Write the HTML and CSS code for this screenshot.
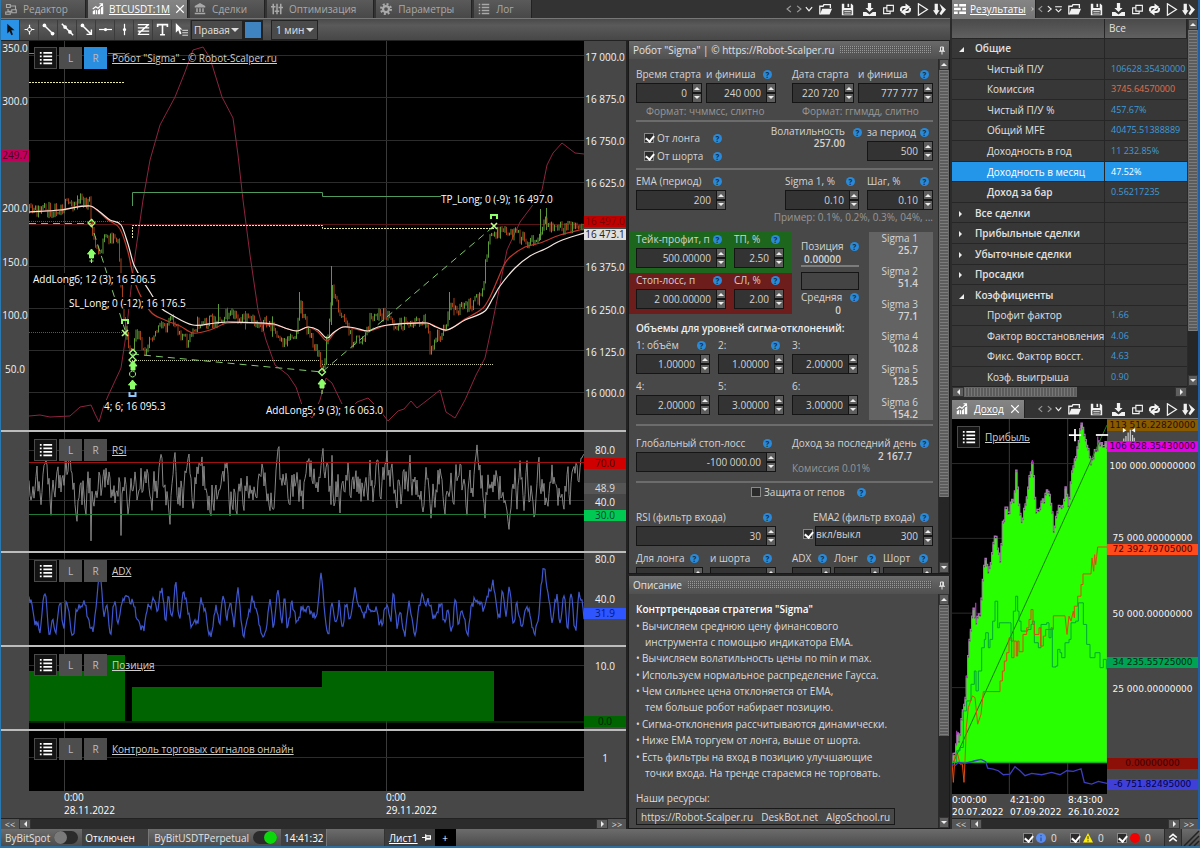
FILE: index.html
```html
<!DOCTYPE html>
<html lang="ru">
<head>
<meta charset="utf-8">
<title>BTCUSDT:1M</title>
<link rel="stylesheet" href="styles.css">
</head>
<body>
<svg class="defs" aria-hidden="true">
  <symbol id="i-list" viewBox="0 0 16 16"><path d="M1 2h2M1 6h2M1 10h2M1 14h2M5 2h10M5 6h10M5 10h10M5 14h10" stroke="currentColor" stroke-width="2" fill="none"/></symbol>
  <symbol id="i-chart" viewBox="0 0 16 16"><path d="M1 15v-4l3-2v6zM5 15V9l2 1v5zM8 15v-5l3-3v8zM12 15V6l3-2v11z" fill="currentColor"/><path d="M1 8l4-3 3 2 6-6M10 1h4v3" stroke="currentColor" stroke-width="1.5" fill="none"/></symbol>
  <symbol id="i-flow" viewBox="0 0 16 16"><path d="M2 2h5v4H2zM9 9h6v4H9zM7 4h7v5M9 11H4V8M1 12h6v3H1z" stroke="currentColor" stroke-width="1.5" fill="none"/></symbol>
  <symbol id="i-bank" viewBox="0 0 16 16"><path d="M8 0l7 4v2H1V4zM3 7h2v5H3zM7 7h2v5H7zM11 7h2v5h-2zM1 13h14v2H1z" fill="currentColor"/></symbol>
  <symbol id="i-sliders" viewBox="0 0 16 16"><path d="M3 1v14M8 1v14M13 1v14M0 5h6M5 11h6M10 6h6" stroke="currentColor" stroke-width="2" fill="none"/></symbol>
  <symbol id="i-gear" viewBox="0 0 16 16"><circle cx="8" cy="8" r="4" stroke="currentColor" stroke-width="3" fill="none"/><circle cx="8" cy="8" r="6.5" stroke="currentColor" stroke-width="3" stroke-dasharray="2.6 2.5" fill="none"/></symbol>
  <symbol id="i-table" viewBox="0 0 16 16"><path d="M0 3h5M7 3h9M0 8h9M11 8h5M0 13h5M7 13h9" stroke="currentColor" stroke-width="3.5" fill="none"/></symbol>
  <symbol id="i-x" viewBox="0 0 16 16"><path d="M2 2l12 12M14 2L2 14" stroke="currentColor" stroke-width="1.8" fill="none"/></symbol>
  <symbol id="i-lt" viewBox="0 0 16 16"><path d="M11 3L5 8l6 5" stroke="currentColor" stroke-width="2" fill="none"/></symbol>
  <symbol id="i-gt" viewBox="0 0 16 16"><path d="M5 3l6 5-6 5" stroke="currentColor" stroke-width="2" fill="none"/></symbol>
  <symbol id="i-down" viewBox="0 0 16 16"><path d="M3 5l5 6 5-6" stroke="currentColor" stroke-width="2" fill="none"/></symbol>
  <symbol id="i-more" viewBox="0 0 16 16"><path d="M2 4h12M3 8l5 5 5-5" stroke="currentColor" stroke-width="2" fill="none"/></symbol>
  <symbol id="i-open" viewBox="0 0 16 16"><path d="M1 14V4h4l1-2h8v4" stroke="currentColor" stroke-width="1.6" fill="none"/><path d="M1 14l3-7h12l-3 7z" fill="currentColor"/></symbol>
  <symbol id="i-save" viewBox="0 0 16 16"><path d="M1 1h3v5h8V1h1l2 2v12H1zM3 9v5h10V9z" fill="currentColor" fill-rule="evenodd"/><path d="M8 1h2v4H8z" fill="currentColor"/><path d="M4 10.500h8M4 12.500h8" stroke="currentColor"/></symbol>
  <symbol id="i-get" viewBox="0 0 16 16"><path d="M6 0h4v6h3l-5 5-5-5h3zM0 11h4l4 3 4-3h4v5H0z" fill="currentColor"/></symbol>
  <symbol id="i-copy" viewBox="0 0 16 16"><path d="M6 3h8v7H6zM6 6H2v7h8v-3" stroke="currentColor" stroke-width="1.4" fill="none"/></symbol>
  <symbol id="i-sync" viewBox="0 0 16 16"><path d="M2.500 10V8q0-3 3-3H9M13.500 6v2q0 3-3 3H7" stroke="currentColor" stroke-width="2.600" fill="none"/><path d="M8 0.500l6 4.500-6 4.500zM8 6.500v9l-6-4.500z" fill="currentColor"/></symbol>
  <symbol id="i-play" viewBox="0 0 16 16"><path d="M3 1l11 7-11 7z" stroke="currentColor" stroke-width="1.6" fill="none"/></symbol>
  <symbol id="i-run" viewBox="0 0 16 16"><path d="M2 1h4v8h2l-4 6-4-6h2zM8 1l8 7-6 7-2-2 3-5z" fill="currentColor"/></symbol>
  <symbol id="i-pin" viewBox="0 0 16 16"><path d="M5 1h6v8H5zM2 9.500h12M8 10v6M9.500 1v8" stroke="currentColor" stroke-width="2" fill="none"/></symbol>
</svg>

<div class="app">
  <div class="top">
    <main class="main">
      <header class="tabbar">
        <nav class="tabs">
          <button class="tab"><svg><use href="#i-flow"/></svg>Редактор</button>
          <button class="tab active"><svg><use href="#i-chart"/></svg><span>BTCUSDT:1M</span><svg class="close"><use href="#i-x"/></svg></button>
          <button class="tab"><svg><use href="#i-bank"/></svg>Сделки</button>
          <button class="tab"><svg><use href="#i-sliders"/></svg>Оптимизация</button>
          <button class="tab"><svg><use href="#i-gear"/></svg>Параметры</button>
          <button class="tab"><svg><use href="#i-list"/></svg>Лог</button>
        </nav>
        <div class="actions">
          <button class="nav dim" aria-label="Назад"><svg><use href="#i-lt"/></svg></button><button class="nav dim" aria-label="Вперёд"><svg><use href="#i-gt"/></svg></button><button class="nav" aria-label="Список"><svg><use href="#i-down"/></svg></button>
          <button class="wide" aria-label="Открыть"><svg><use href="#i-open"/></svg></button><button class="wide" aria-label="Сохранить"><svg><use href="#i-save"/></svg></button><button class="wide" aria-label="Загрузить"><svg><use href="#i-get"/></svg></button><button aria-label="Копировать"><svg><use href="#i-copy"/></svg></button><button aria-label="Обновить"><svg><use href="#i-sync"/></svg></button><button aria-label="Пуск"><svg><use href="#i-play"/></svg></button><button aria-label="Выполнить"><svg><use href="#i-run"/></svg></button>
        </div>
      </header>

      <div class="toolbar">
        <button class="tool on" aria-label="Курсор"><svg viewBox="0 0 16 16"><path d="M4 1v12l3-3 2 5 2-1-2-5h4z" fill="#111"/></svg></button>
        <button class="tool" aria-label="Перекрестие"><svg viewBox="0 0 16 16"><path d="M8 2v4M8 10v4M2 8h4M10 8h4" stroke="#fff" stroke-width="1.500"/><circle cx="8" cy="8" r="2.500" stroke="#fff" fill="none"/></svg></button>
        <button class="tool" aria-label="Отрезок"><svg viewBox="0 0 16 16"><path d="M3 3l10 10" stroke="#fff" stroke-width="1.800"/><circle cx="3" cy="3" r="2.300" fill="#fff"/><circle cx="13" cy="13" r="2.300" fill="#fff"/></svg></button>
        <button class="tool" aria-label="Прямая"><svg viewBox="0 0 16 16"><path d="M1 1l14 14" stroke="#fff" stroke-width="1.800"/><circle cx="5" cy="5" r="2.300" fill="#fff"/><circle cx="11" cy="11" r="2.300" fill="#fff"/></svg></button>
        <button class="tool" aria-label="Луч"><svg viewBox="0 0 16 16"><path d="M3 3l11 11M14 8v6H8" stroke="#fff" stroke-width="1.800" fill="none"/><circle cx="3" cy="3" r="2.300" fill="#fff"/></svg></button>
        <button class="tool" aria-label="Горизонталь"><svg viewBox="0 0 16 16"><path d="M0 8h16" stroke="#fff" stroke-width="1.500"/><circle cx="8" cy="8" r="2" fill="#fff"/></svg></button>
        <button class="tool" aria-label="Вертикаль"><svg viewBox="0 0 16 16"><path d="M8 1v14" stroke="#fff" stroke-width="1.500"/><circle cx="8" cy="8" r="2" fill="#fff"/></svg></button>
        <button class="tool" aria-label="Фибоначчи"><svg viewBox="0 0 16 16"><path d="M1 2h14M1 6h14M1 10h14M1 14h14M2 13L14 2" stroke="#fff" stroke-width="1.800"/></svg></button>
        <button class="tool" aria-label="Текст"><svg viewBox="0 0 16 16"><path d="M2 5V2h12v3M8 2v12M5 14.500h6" stroke="#fff" stroke-width="2" fill="none"/></svg></button>
        <button class="tool" aria-label="Выбор"><svg viewBox="0 0 16 16"><path d="M1 0v12l3-3 2 5 2-1-2-5h3z" fill="#fff"/><path d="M9 9h7M9 12h7M9 15h7" stroke="#fff"/></svg></button>
        <label class="pick"><select class="axis-side" aria-label="Ось"><option>Правая</option></select></label>
        <button class="swatch" aria-label="Цвет"></button>
        <label class="pick period"><select class="tf" aria-label="Период"><option>1 мин</option></select></label>
      </div>

      <div class="work">
        <section class="charts">
          <div class="pane pane-price" id="price">
            <div class="axis left"></div><div class="plot"></div><div class="axis right"></div>
            <div class="legend"><button class="lb ic" aria-label="Меню"><svg><use href="#i-list"/></svg></button><button class="lb">L</button><button class="lb on">R</button><a href="#price">Робот "Sigma" - © Robot-Scalper.ru</a></div>
          </div>
          <div class="pane pane-rsi" id="rsi">
            <div class="axis left"></div><div class="plot"></div><div class="axis right"></div>
            <div class="legend"><button class="lb ic" aria-label="Меню"><svg><use href="#i-list"/></svg></button><button class="lb">L</button><button class="lb">R</button><a href="#rsi">RSI</a></div>
          </div>
          <div class="pane pane-adx" id="adx">
            <div class="axis left"></div><div class="plot"></div><div class="axis right"></div>
            <div class="legend"><button class="lb ic" aria-label="Меню"><svg><use href="#i-list"/></svg></button><button class="lb">L</button><button class="lb">R</button><a href="#adx">ADX</a></div>
          </div>
          <div class="pane pane-pos" id="pos">
            <div class="axis left"></div><div class="plot"></div><div class="axis right"></div>
            <div class="legend"><button class="lb ic" aria-label="Меню"><svg><use href="#i-list"/></svg></button><button class="lb">L</button><button class="lb">R</button><a href="#pos">Позиция</a></div>
          </div>
          <div class="pane pane-ctl" id="ctl">
            <div class="axis left"></div><div class="plot"></div><div class="axis right"></div>
            <div class="legend"><button class="lb ic" aria-label="Меню"><svg><use href="#i-list"/></svg></button><button class="lb">L</button><button class="lb">R</button><a href="#ctl">Контроль торговых сигналов онлайн</a></div>
          </div>
          <div class="times"><span>0:00<br>28.11.2022</span><span>0:00<br>29.11.2022</span></div>
          <div class="hbar"><button class="jump">&lt;&lt;</button><button class="arr l" aria-label="Влево"></button><div class="track"></div><button class="arr r" aria-label="Вправо"></button><button class="jump">&gt;&gt;</button></div>
        </section>

        <section class="docks">
          <div class="dock dock-params">
            <div class="dock-title">Робот "Sigma" | © https://Robot-Scalper.ru<i></i><svg><use href="#i-pin"/></svg></div>
            <div class="dock-body">
              <form class="form">
                <div class="sec two">
                  <div>
                    <div class="g-time">
                      <label for="t1">Время старта</label><label for="t2">и финиша<b class="help">?</b></label>
                      <span class="num"><input id="t1" value="0"><button type="button" class="sp"></button></span><span class="num"><input id="t2" value="240 000"><button type="button" class="sp"></button></span>
                    </div>
                    <p class="hint in">Формат: ччммсс, слитно</p>
                  </div>
                  <div>
                    <div class="g-date">
                      <label for="d1">Дата старта</label><label for="d2">и финиша<b class="help">?</b></label>
                      <span class="num"><input id="d1" value="220 720"><button type="button" class="sp"></button></span><span class="num"><input id="d2" value="777 777"><button type="button" class="sp"></button></span>
                    </div>
                    <p class="hint in">Формат: ггммдд, слитно</p>
                  </div>
                </div>
                <div class="sec g-vol">
                  <div class="checks"><span><label><input type="checkbox" checked>От лонга</label><b class="help">?</b></span><span><label><input type="checkbox" checked>От шорта</label><b class="help">?</b></span></div>
                  <div class="vol"><span>Волатильность</span><strong>257.00</strong></div><b class="help vh">?</b>
                  <div class="fld"><label for="vp">за период<b class="help">?</b></label><span class="num"><input id="vp" value="500"><button type="button" class="sp"></button></span></div>
                </div>
                <div class="sec g-ema">
                  <div class="fld"><label for="ema">EMA (период)<b class="help">?</b></label><span class="num"><input id="ema" value="200"><button type="button" class="sp"></button></span></div>
                  <div class="fld s1"><label for="s1">Sigma 1, %<b class="help">?</b></label><span class="num"><input id="s1" value="0.10"><button type="button" class="sp"></button></span></div>
                  <div class="fld"><label for="st">Шаг, %<b class="help">?</b></label><span class="num"><input id="st" value="0.10"><button type="button" class="sp"></button></span></div>
                  <p class="hint ex">Пример: 0.1%, 0.2%, 0.3%, 04%, ...</p>
                </div>
                <div class="sec g-levels">
                  <div class="lv-left">
                    <div class="lv-top">
                      <div>
                        <div class="band tp">
                          <div class="fld"><label for="tp">Тейк-профит, п<b class="help">?</b></label><span class="num"><input id="tp" value="500.00000"><button type="button" class="sp"></button></span></div>
                          <div class="fld"><label for="tpp">ТП, %<b class="help">?</b></label><span class="num"><input id="tpp" value="2.50"><button type="button" class="sp"></button></span></div>
                        </div>
                        <div class="band sl">
                          <div class="fld"><label for="sl">Стоп-лосс, п<b class="help">?</b></label><span class="num"><input id="sl" value="2 000.00000"><button type="button" class="sp"></button></span></div>
                          <div class="fld"><label for="slp">СЛ, %<b class="help">?</b></label><span class="num"><input id="slp" value="2.00"><button type="button" class="sp"></button></span></div>
                        </div>
                      </div>
                      <div class="pos">
                        <label for="pf">Позиция<b class="help">?</b></label><strong class="ruled">0.00000</strong>
                        <input id="pf" class="blank" value="">
                        <span class="row">Средняя<b class="help">?</b></span><strong>0</strong>
                      </div>
                    </div>
                    <h4>Объемы для уровней сигма-отклонений:</h4>
                    <div class="g-qty">
                      <div class="fld"><label for="q1">1: объём<b class="help">?</b></label><span class="num"><input id="q1" value="1.00000"><button type="button" class="sp"></button></span></div>
                      <div class="fld"><label for="q2">2:<b class="help">?</b></label><span class="num"><input id="q2" value="1.00000"><button type="button" class="sp"></button></span></div>
                      <div class="fld"><label for="q3">3:</label><span class="num"><input id="q3" value="2.00000"><button type="button" class="sp"></button></span></div>
                      <div class="fld"><label for="q4">4:</label><span class="num"><input id="q4" value="2.00000"><button type="button" class="sp"></button></span></div>
                      <div class="fld"><label for="q5">5:</label><span class="num"><input id="q5" value="3.00000"><button type="button" class="sp"></button></span></div>
                      <div class="fld"><label for="q6">6:</label><span class="num"><input id="q6" value="3.00000"><button type="button" class="sp"></button></span></div>
                    </div>
                  </div>
                  <dl class="sigmas">
                    <div><dt>Sigma 1</dt><dd>25.7</dd></div><div><dt>Sigma 2</dt><dd>51.4</dd></div><div><dt>Sigma 3</dt><dd>77.1</dd></div><div><dt>Sigma 4</dt><dd>102.8</dd></div><div><dt>Sigma 5</dt><dd>128.5</dd></div><div><dt>Sigma 6</dt><dd>154.2</dd></div>
                  </dl>
                </div>
                <div class="sec two g-glob">
                  <div class="fld"><label for="gs">Глобальный стоп-лосс<b class="help">?</b></label><span class="num"><input id="gs" value="-100 000.00"><button type="button" class="sp"></button></span></div>
                  <div class="day"><span class="row">Доход за последний день<b class="help">?</b></span><strong>2 167.7</strong><span class="hint">Комиссия 0.01%</span></div>
                </div>
                <div class="sec last">
                  <div class="gap"><label><input type="checkbox">Защита от гепов</label><b class="help">?</b></div>
                  <div class="two">
                    <div class="fld"><label for="rsi-f">RSI (фильтр входа)<b class="help">?</b></label><span class="num"><input id="rsi-f" value="30"><button type="button" class="sp"></button></span></div>
                    <div class="fld e2"><label for="e2">EMA2 (фильтр входа)<b class="help">?</b></label><span class="num"><input id="e2" value="300"><button type="button" class="sp"></button></span><label class="tog"><input type="checkbox" checked>вкл/выкл</label></div>
                  </div>
                  <div class="two cut">
                    <div class="half">
                      <div class="fld"><label for="f1">Для лонга<b class="help">?</b></label><span class="num"><input id="f1"><button type="button" class="sp"></button></span></div>
                      <div class="fld"><label for="f2">и шорта<b class="help">?</b></label><span class="num"><input id="f2"><button type="button" class="sp"></button></span></div>
                    </div>
                    <div class="third">
                      <div class="fld"><label for="f3">ADX<b class="help">?</b></label><span class="num"><input id="f3"><button type="button" class="sp"></button></span></div>
                      <div class="fld"><label for="f4">Лонг<b class="help">?</b></label><span class="num"><input id="f4"><button type="button" class="sp"></button></span></div>
                      <div class="fld"><label for="f5">Шорт<b class="help">?</b></label><span class="num"><input id="f5"><button type="button" class="sp"></button></span></div>
                    </div>
                  </div>
                </div>
              </form>
              <div class="vbar"><button class="arr u" aria-label="Вверх"></button><div class="thumb t-params"></div><div class="track"></div><button class="arr d" aria-label="Вниз"></button></div>
            </div>
          </div>
          <div class="dock dock-about">
            <div class="dock-title">Описание<i></i><svg><use href="#i-pin"/></svg></div>
            <div class="dock-body">
              <div class="about">
                <h4>Контртрендовая стратегия "Sigma"</h4>
                <ul>
                  <li>Вычисляем среднюю цену финансового<br><span>инструмента с помощью индикатора EMA.</span></li>
                  <li>Вычисляем волатильность цены по min и max.</li>
                  <li>Используем нормальное распределение Гаусса.</li>
                  <li>Чем сильнее цена отклоняется от EMA,<br><span>тем больше робот набирает позицию.</span></li>
                  <li>Сигма-отклонения рассчитываются динамически.</li>
                  <li>Ниже EMA торгуем от лонга, выше от шорта.</li>
                  <li>Есть фильтры на вход в позицию улучшающие<br><span>точки входа. На тренде стараемся не торговать.</span></li>
                </ul>
                <p>Наши ресурсы:</p>
                <div class="links"><a href="#r1">https://Robot-Scalper.ru</a><a href="#r2">DeskBot.net</a><a href="#r3">AlgoSchool.ru</a></div>
              </div>
              <div class="vbar"><button class="arr u" aria-label="Вверх"></button><div class="thumb t-about"></div><div class="track"></div><button class="arr d" aria-label="Вниз"></button></div>
            </div>
          </div>
        </section>
      </div>
    </main>

    <aside class="side">
      <header class="tabbar">
        <nav class="tabs"><button class="tab active res"><svg><use href="#i-table"/></svg><span>Результаты</span><svg class="clip"><use href="#i-gt"/></svg></button></nav>
        <div class="actions">
          <button class="nav dim" aria-label="Назад"><svg><use href="#i-lt"/></svg></button><button class="nav" aria-label="Вперёд"><svg><use href="#i-gt"/></svg></button><button class="nav" aria-label="Список"><svg><use href="#i-more"/></svg></button>
          <button class="wide" aria-label="Открыть"><svg><use href="#i-open"/></svg></button><button class="wide" aria-label="Сохранить"><svg><use href="#i-save"/></svg></button><button class="wide" aria-label="Загрузить"><svg><use href="#i-get"/></svg></button><button aria-label="Копировать"><svg><use href="#i-copy"/></svg></button><button aria-label="Обновить"><svg><use href="#i-sync"/></svg></button><button aria-label="Пуск"><svg><use href="#i-play"/></svg></button><button aria-label="Выполнить"><svg><use href="#i-run"/></svg></button>
        </div>
      </header>
      <div class="results">
        <div class="res-view">
          <table>
            <thead><tr><th></th><th>Все</th></tr></thead>
            <tbody>
              <tr class="grp open"><th>Общие</th><td></td></tr>
              <tr><th>Чистый П/У</th><td>106628.35430000</td></tr>
              <tr><th>Комиссия</th><td class="neg">3745.64570000</td></tr>
              <tr><th>Чистый П/У %</th><td>457.67%</td></tr>
              <tr><th>Общий MFE</th><td>40475.51388889</td></tr>
              <tr><th>Доходность в год</th><td>11 232.85%</td></tr>
              <tr class="sel"><th>Доходность в месяц</th><td>47.52%</td></tr>
              <tr class="strong"><th>Доход за бар</th><td>0.56217235</td></tr>
              <tr class="grp"><th>Все сделки</th><td></td></tr>
              <tr class="grp"><th>Прибыльные сделки</th><td></td></tr>
              <tr class="grp"><th>Убыточные сделки</th><td></td></tr>
              <tr class="grp"><th>Просадки</th><td></td></tr>
              <tr class="grp open"><th>Коэффициенты</th><td></td></tr>
              <tr><th>Профит фактор</th><td>1.66</td></tr>
              <tr><th>Фактор восстановления</th><td>4.06</td></tr>
              <tr><th>Фикс. Фактор восст.</th><td>4.63</td></tr>
              <tr><th>Коэф. выигрыша</th><td>0.90</td></tr>
            </tbody>
          </table>
        </div>
        <div class="vbar"><button class="arr u" aria-label="Вверх"></button><div class="thumb t-res"></div><div class="track"></div><button class="arr d" aria-label="Вниз"></button></div>
      </div>
      <div class="hbar res-h"><button class="arr l" aria-label="Влево"></button><div class="hthumb"></div><div class="track"></div><button class="arr r" aria-label="Вправо"></button></div>
      <header class="tabbar">
        <nav class="tabs"><button class="tab active inc"><svg><use href="#i-chart"/></svg><span>Доход</span><svg class="close"><use href="#i-x"/></svg></button></nav>
        <div class="actions">
          <button class="nav dim" aria-label="Назад"><svg><use href="#i-lt"/></svg></button><button class="nav dim" aria-label="Вперёд"><svg><use href="#i-gt"/></svg></button><button class="nav" aria-label="Список"><svg><use href="#i-down"/></svg></button>
          <button class="wide" aria-label="Открыть"><svg><use href="#i-open"/></svg></button><button class="wide" aria-label="Сохранить"><svg><use href="#i-save"/></svg></button><button class="wide" aria-label="Загрузить"><svg><use href="#i-get"/></svg></button><button aria-label="Копировать"><svg><use href="#i-copy"/></svg></button><button aria-label="Обновить"><svg><use href="#i-sync"/></svg></button><button aria-label="Пуск"><svg><use href="#i-play"/></svg></button><button aria-label="Выполнить"><svg><use href="#i-run"/></svg></button>
        </div>
      </header>
      <div class="pane income" id="income">
        <div class="plot"></div><div class="axis right"></div>
        <div class="legend"><button class="lb ic" aria-label="Меню"><svg><use href="#i-list"/></svg></button><a href="#income">Прибыль</a></div>
        <div class="zooms"><button aria-label="Увеличить"><svg viewBox="0 0 16 16"><path d="M8 1v14M1 8h14" stroke="#fff" stroke-width="2"/></svg></button><button aria-label="Уменьшить"><svg viewBox="0 0 16 16"><path d="M1 8h14" stroke="#fff" stroke-width="2"/></svg></button><button aria-label="Масштаб"><svg viewBox="0 0 16 16"><path d="M1 0v5l4-2.500zM15 0v5l-4-2.500z" fill="#fff"/><path d="M2 15v-3M4.500 15v-6M7 15V5M9.500 15V2M12 15V8M14 15v-4" stroke="#ccc" stroke-width="1.400"/></svg></button></div>
      </div>
      <div class="times inc-times"><span>0:00:00<br>20.07.2022</span><span>4:21:00<br>07.09.2022</span><span>8:43:00<br>26.10.2022</span></div>
      <div class="hbar"><button class="jump">&lt;&lt;</button><button class="arr l" aria-label="Влево"></button><div class="track"></div><button class="arr r" aria-label="Вправо"></button><button class="jump">&gt;&gt;</button></div>
    </aside>
  </div>

  <footer class="status">
    <label class="conn">ByBitSpot<input type="checkbox" class="switch"></label><span class="cell off">Отключен</span>
    <label class="conn second">ByBitUSDTPerpetual<input type="checkbox" class="switch" checked></label><span class="cell clock">14:41:32</span>
    <span class="void"></span>
    <button class="sheet"><span>Лист1</span><svg><use href="#i-pin"/></svg></button><button class="plus">+</button>
    <span class="grow"></span>
    <label class="cnt"><input type="checkbox" checked><svg viewBox="0 0 16 16"><circle cx="8" cy="8" r="8" fill="#5b8def"/><path d="M8 3v2M8 7v6" stroke="#2b50a0" stroke-width="2"/></svg>0</label>
    <label class="cnt"><input type="checkbox" checked><svg viewBox="0 0 16 16"><path d="M8 0l8 15H0z" fill="#ffee00"/><path d="M8 5v5M8 11.500v2" stroke="#333" stroke-width="1.600"/></svg>0</label>
    <label class="cnt"><input type="checkbox" checked><svg viewBox="0 0 16 16"><circle cx="8" cy="8" r="8" fill="#f00000"/></svg>0</label>
    <button class="up" aria-label="Развернуть"><svg viewBox="0 0 16 16"><path d="M2 8l6-5 6 5M2 14l6-5 6 5" stroke="#fff" stroke-width="2.600" fill="none"/></svg></button>
    <svg class="grip" viewBox="0 0 16 16"><path d="M1 16L16 1M6 16L16 6M11 16l5-5" stroke="#222" stroke-width="1.500"/></svg>
  </footer>
</div>
<script src="charts.js"></script>
</body>
</html>
```

FILE: styles.css
```css
* { box-sizing: border-box; }
body { margin: 0; background: #333; color: #e2e2e2; font: 10px/14px "Open Sans", "Noto Sans", sans-serif; }
button, input, select { font: inherit; color: inherit; margin: 0; padding: 0; border: 0; background: none; border-radius: 0; }
button { display: flex; align-items: center; justify-content: center; }
a { color: inherit; }
h4, p, ul, dl, dd { margin: 0; padding: 0; }
h4 { font-size: 10px; font-weight: 600; }
ul { list-style: none; }
svg { display: block; }
.defs { position: absolute; width: 0; height: 0; }

.app { display: flex; flex-direction: column; height: 100vh; min-height: 640px; border-left: 1px solid #2a78b0; border-bottom: 2px solid #2f6f9f; overflow: hidden; }
.top { flex: 1; min-height: 0; display: grid; grid-template-columns: minmax(0, 1fr) 250px; }
.main, .side { display: flex; flex-direction: column; min-width: 0; min-height: 0; }
.side { border-right: 2px solid #1d5fa8; padding-left: 2px; background: #2b2b2b; }

/* tab strips */
.tabbar { flex: none; display: flex; height: 19px; background: #333; border-bottom: 1px solid #777; }
.tabs { display: flex; gap: 2px; }
.tab { height: 18px; gap: 6px; padding: 0 4px; color: #a9a9a9; background: linear-gradient(#5a5a5a, #484848); border-right: 1px solid #222; }
.tab svg { width: 12px; height: 12px; }
.main .tab { padding-right: 17px; }
.main .tab.active { gap: 5px; padding-right: 2px; }
.tab.active { color: #fff; background: linear-gradient(#858585, #757575); }
.tab.active span { text-decoration: underline; }
.tab .close { width: 10px; height: 10px; }
.tab.res { gap: 4px; padding: 0 0 0 2px; }
.tab .clip { width: 5px; }
.actions { margin-left: auto; display: flex; align-items: center; color: #f2f2f2; }
.main .actions { padding-right: 2px; }
.side .actions { padding-right: 1px; }
.actions button { width: 17px; height: 18px; }
.actions .wide { width: 22px; }
.actions .nav { width: 10px; }
.side .actions .nav { width: 9px; }
.actions .dim { color: #9a9a9a; }
.actions svg { width: 13px; height: 13px; }
.actions .nav svg { width: 10px; height: 10px; }

/* drawing tools */
.toolbar { flex: none; display: flex; align-items: center; height: 21px; background: linear-gradient(#4a4a4a, #5a5a5a 30%, #474747); }
.tool { width: 19px; height: 20px; border-right: 1px solid #3c3c3c; }
.tool svg { width: 13px; height: 13px; }
.tool.on { background: #2a93e8; }
.pick { position: relative; border: 1px solid #222; background: #4a4a4a; }
.pick select { appearance: none; height: 18px; padding: 0 0 0 2px; display: block; }
.pick .axis-side { width: 50px; }
.pick .tf { width: 45px; padding-left: 4px; }
.pick::after { content: ""; position: absolute; right: 3px; top: 7px; border: 4px solid transparent; border-top-color: #ddd; border-bottom: 0; pointer-events: none; }
.period { margin-left: 8px; }
.swatch { width: 20px; height: 20px; border: 2px solid #222; background: #3f83c0; }

/* workspace */
.work { flex: 1; min-height: 0; display: grid; grid-template-columns: minmax(0, 1fr) 322px; border-top: 1px solid #222; background: #222; }
.charts { display: flex; flex-direction: column; min-height: 0; background: #474747; margin-right: 2px; }
.pane { position: relative; flex: none; display: grid; grid-template-columns: 28px minmax(0, 1fr) 42px; border-bottom: 2px solid #bdbdbd; }
.pane-price { flex: 1; min-height: 0; }
.pane-rsi { height: 121px; }
.pane-adx { height: 94px; }
.pane-pos { height: 84px; }
.pane-ctl { height: 60px; border-bottom: 0; }
.plot { position: relative; background: #000; overflow: hidden; }
.plot svg { width: 100%; height: 100%; }
.plot path { vector-effect: non-scaling-stroke; }
.axis { position: relative; overflow: hidden; background: #474747; color: #f4f4f4; }
.axis span { position: absolute; left: 0; right: 0; height: 11px; margin-top: -5px; line-height: 11px; text-align: center; white-space: nowrap; }
.note { position: absolute; height: 12px; margin-top: -6px; line-height: 12px; color: #fff; background: #000; white-space: nowrap; }
.axis .tag-pink { background: #c2005c; color: #4a0022; }
.tag-red { background: #d00000; color: #400; }
.tag-redtop { background: #c00000; color: #700; }
.tag-white { background: #e0e0e0; color: #222; }
.tag-gray { background: #555; color: #ddd; }
.tag-green { background: #00c853; color: #043; }
.tag-blue { background: #2f55ff; color: #001a80; }
.tag-dark { background: #006400; color: #001e00; }
.legend { position: absolute; left: 33px; top: 7px; display: flex; align-items: center; gap: 2px; }
.pane-price .legend { top: 6px; }
.lb { width: 23px; height: 22px; background: #4d4d4d; color: #bbb; }
.lb.ic { background: #141414; border: 1px solid #4a4a4a; color: #fff; }
.lb.on { background: #2a8ee0; }
.lb svg { width: 14px; height: 14px; }
.legend a { margin-left: 3px; color: #cfcfcf; }
.times { flex: none; display: grid; grid-template-columns: 322px 1fr; padding-left: 63px; height: 27px; line-height: 13px; color: #fff; background: #474747; }

/* scroll bars */
.hbar { flex: none; display: flex; height: 11px; background: #222; border-top: 1px solid #222; }
.hbar .track { flex: 1; background: #2b2b2b; }
.jump { width: 18px; font-size: 9px; line-height: 9px; background: #555; color: #ddd; }
.arr { width: 12px; background: #5e5e5e; border: 1px solid #333; }
.arr::before { content: ""; border: 3px solid transparent; }
.arr.l::before { border-right-color: #eee; border-left: 0; }
.arr.r::before { border-left-color: #eee; border-right: 0; }
.arr.u::before { border-bottom-color: #eee; border-top: 0; }
.arr.d::before { border-top-color: #eee; border-bottom: 0; }
.vbar { width: 11px; flex: none; display: flex; flex-direction: column; background: #222; border-left: 1px solid #2a2a2a; }
.vbar .arr { width: 10px; height: 11px; flex: none; }
.vbar .track { flex: 1; background: #262626; }
.thumb { flex: none; background: repeating-linear-gradient(#7c7c7c 0 1px, #5c5c5c 1px 3px); border: solid #6a6a6a; border-width: 0 1px; }
.t-params { height: 83%; }
.t-about { height: 56%; }
.t-res { height: 82%; }
.hthumb { width: 48%; background: repeating-linear-gradient(90deg, #777 0 1px, #5c5c5c 1px 3px); border: 1px solid #666; }

/* docks */
.docks { display: flex; flex-direction: column; gap: 2px; min-height: 0; }
.dock { display: flex; flex-direction: column; min-height: 0; border: 1px solid #191919; border-width: 0 1px 1px; background: #484848; }
.dock-params { height: 533px; flex: none; }
.dock-about { flex: 1; }
.dock-title { flex: none; display: flex; align-items: center; gap: 6px; height: 18px; padding: 0 3px 0 4px; background: linear-gradient(#6a6a6a, #505050); white-space: nowrap; }
.dock-title i { flex: 1; height: 8px; background: repeating-linear-gradient(90deg, transparent 0 1px, #555 1px 2px), repeating-linear-gradient(#999 0 1px, transparent 1px 2px); }
.dock-title svg { width: 8px; height: 9px; }
.dock-body { flex: 1; min-height: 0; display: flex; overflow: hidden; }
.form { flex: 1; min-width: 0; padding: 8px 5px 0 7px; overflow: hidden; white-space: nowrap; color: #d4d4d4; }
.sec { border-bottom: 2px solid #6c6c6c; }
.two { display: grid; grid-template-columns: 140px minmax(0, 1fr); gap: 16px; }
.fld { display: flex; flex-direction: column; gap: 2px; min-width: 0; }
.form label, .row { display: flex; align-items: center; height: 14px; }
.fld > label, .row { padding-right: 4px; }
label > .help, .row > .help { margin-left: auto; }
.help { flex: none; width: 9px; height: 9px; border-radius: 50%; background: #2a8ad8; color: #10304c; font-size: 8px; line-height: 9px; font-weight: 700; text-align: center; }
.num { display: flex; height: 20px; border: 1px solid #151515; background: #333; }
.num input { flex: 1; min-width: 0; width: 100%; padding-right: 5px; text-align: right; }
.sp { position: relative; flex: none; width: 9px; height: 18px; background: linear-gradient(#5e5e5e 0 8px, #151515 8px 10px, #5e5e5e 10px); border-left: 1px solid #151515; }
.sp::before, .sp::after { content: ""; position: absolute; left: 1px; border: 3px solid transparent; }
.sp::before { top: 3px; border-bottom-color: #eee; border-top: 0; }
.sp::after { bottom: 3px; border-top-color: #eee; border-bottom: 0; }
.hint { color: #979797; }
.hint.in { padding: 1px 0 2px 10px; }
.g-time, .g-date { display: grid; gap: 2px 4px; }
.g-time { grid-template-columns: 66px minmax(0, 1fr); }
.g-date { grid-template-columns: 62px minmax(0, 1fr); }
.g-time label:nth-child(2), .g-date label:nth-child(2) { padding-right: 4px; }
.form input[type=checkbox], .cnt input { appearance: none; position: relative; flex: none; width: 10px; height: 10px; margin: 0 3px 0 0; border: 1px solid #888; background: #2a2a2a; }
.form input[type=checkbox]:checked::before, .cnt input:checked::before { content: ""; position: absolute; left: 2px; top: 0; width: 4px; height: 6px; border: solid #fff; border-width: 0 2px 2px 0; transform: rotate(40deg); }
.g-vol { display: grid; grid-template-columns: minmax(0, 1fr) 70px 22px 66px; padding: 3px 0 5px; }
.checks { display: flex; flex-direction: column; gap: 4px; padding: 6px 0 0 8px; }
.checks span { display: flex; align-items: center; }
.checks label { width: 69px; }
.vol { display: flex; flex-direction: column; align-items: flex-end; line-height: 12px; }
.vh { margin: 3px 0 0 8px; }
.g-ema { display: grid; grid-template-columns: 90px minmax(0, 1fr) 66px; column-gap: 8px; padding-top: 4px; border-bottom: 0; }
.g-ema .s1 { margin-left: auto; width: 74px; }
.g-ema .ex { grid-column: 1 / -1; text-align: right; }
.g-levels { display: grid; grid-template-columns: minmax(0, 1fr) 64px; gap: 10px; padding: 8px 0 4px; }
.lv-left { padding-bottom: 5px; }
.lv-top { display: grid; grid-template-columns: 156px 58px; justify-content: space-between; }
.band { display: grid; grid-template-columns: 90px 50px; gap: 8px; margin-left: -7px; padding: 0 5px 5px 7px; height: 41px; width: 163px; }
.tp { background: #1d661d; }
.sl { background: #6e1d1d; }
.pos { display: flex; flex-direction: column; padding-top: 7px; line-height: 12px; }
.pos strong { text-align: right; padding-right: 18px; }
.pos .ruled { border-bottom: 2px solid #7c7c7c; }
.pos .row { padding-right: 0; }
.blank { width: 100%; height: 18px; margin: 5px 0 0; border: 1px solid #151515; background: #444; }
.form h4 { color: #eee; padding: 5px 0 3px; }
.g-qty { display: grid; grid-template-columns: 74px 66px 66px; gap: 5px 8px; }
.sigmas { background: #636363; display: flex; flex-direction: column; justify-content: space-between; line-height: 12px; text-align: right; padding: 0 15px 0 0; }
.sigmas dd, strong { font-weight: 600; }
.g-glob { padding: 10px 0 7px; }
.day { display: flex; flex-direction: column; line-height: 12px; }
.day strong { text-align: right; padding-right: 21px; }
.last { border: 0; padding-top: 2px; display: flex; flex-direction: column; gap: 5px; }
.gap { display: flex; align-items: center; gap: 12px; padding: 0 0 6px 115px; }
.e2 { position: relative; }
.e2 > label:first-child { padding-left: 21px; }
.e2 .num { margin-left: 23px; }
.form .tog { position: absolute; left: 11px; top: 17px; }
.half { display: grid; grid-template-columns: 67px 66px; gap: 7px; }
.third { display: grid; grid-template-columns: 39px 46px 49px; gap: 3px; }
.about { flex: 1; padding: 7px 8px 0 7px; color: #dcdcdc; line-height: 16px; white-space: nowrap; overflow: hidden; }
.about h4 { color: #fff; line-height: 16px; }
.about li { padding-left: 6px; line-height: 16px; position: relative; }
.about li:nth-child(odd) { margin-top: 1px; }
.about li::before { content: "•"; position: absolute; left: 0; }
.about li span { padding-left: 3px; }
.about p { padding: 9px 0 2px; }
.links { display: inline-flex; gap: 8px; height: 17px; align-items: center; padding: 0 4px; border: 1px solid #191919; }
.links a { text-decoration: none; }

/* results */
.results { flex: none; display: flex; height: 367px; }
.res-view { flex: 1; min-width: 0; overflow: hidden; background: #373737; }
.results table { width: 100%; height: 369px; border-collapse: collapse; table-layout: fixed; }
.results th, .results td { padding: 0; border-bottom: 1px solid #262626; text-align: left; font-weight: 400; white-space: nowrap; line-height: 14px; }
.results th { padding-left: 35px; border-right: 1px solid #262626; }
.results td { padding-left: 6px; color: #3f9bd8; font-size: 9px; }
.results thead th { height: 19px; padding-left: 4px; background: linear-gradient(#4a4a4a, #606060); width: 82px; }
.results thead th:first-child { width: auto; }
.results td.neg { color: #e0704a; }
.grp th::before { content: ""; display: inline-block; width: 0; margin-right: 13px; border: 3px solid transparent; border-left: 3px solid #eee; border-right: 0; }
.results .grp th { padding-left: 7px; font-weight: 600; }
.grp.open th::before { border: solid transparent; border-width: 5px 0 0 5px; border-left-color: transparent; border-bottom: 5px solid #eee; border-top: 0; margin-right: 11px; }
.results .strong th { font-weight: 600; }
.sel { background: #2496ea; }
.results .sel td, .results .sel th { color: #fff; }
.res-h { width: calc(100% - 11px); margin-bottom: 3px; }

/* income */
.income { flex: 1; min-height: 0; grid-template-columns: minmax(0, 1fr) 91px; border-bottom: 0; font: 9px/12px "DejaVu Sans", sans-serif; }
.income .legend { left: 5px; top: 7px; font: 10px/14px "Open Sans", sans-serif; }
.zooms { position: absolute; right: 62px; top: 9px; display: flex; gap: 13px; }
.zooms svg { width: 14px; height: 14px; }
.tag-gold { background: #8a5a00; color: #1e1200; }
.tag-mag { background: #e600e6; color: #30003a; }
.tag-orange { background: #ff4a1c; color: #3a0800; }
.tag-emer { background: #00a352; color: #002a12; }
.tag-maroon { background: #8c0f08; color: #3a0000; }
.tag-indigo { background: #4040d8; color: #00004a; }
.inc-times { grid-template-columns: 58px 58px 1fr; padding-left: 0; height: 24px; font: 9px/12px "DejaVu Sans", sans-serif; white-space: nowrap; }

/* status bar */
.status { flex: none; display: flex; align-items: center; height: 17px; background: linear-gradient(#6c6c6c, #4c4c4c); white-space: nowrap; }
.conn { display: flex; align-items: center; gap: 4px; padding-left: 4px; }
.second { padding-left: 5px; }
.switch { appearance: none; width: 24px; height: 13px; border-radius: 7px; background: #2b2b2b; display: flex; }
.switch::before { content: ""; width: 13px; height: 13px; border-radius: 50%; background: #7a7a7a; }
.switch:checked { justify-content: flex-end; }
.switch:checked::before { background: #0bd80b; }
.cell { height: 17px; line-height: 19px; margin-left: 4px; padding-left: 3px; color: #fff; background: #404040; border-right: 1px solid #777; }
.off { width: 67px; }
.clock { width: 46px; }
.void { width: 58px; border-right: 1px solid #333; height: 17px; }
.sheet { height: 17px; gap: 4px; padding: 0 4px; background: #3c3c3c; color: #fff; }
.sheet span { text-decoration: underline; }
.sheet svg { width: 9px; height: 9px; transform: rotate(90deg); }
.plus { width: 21px; height: 17px; background: #000; color: #fff; }
.grow { flex: 1; }
.cnt { display: flex; align-items: center; width: 47px; }
.cnt svg { width: 10px; height: 10px; margin-right: 5px; }
.up { width: 18px; height: 17px; background: #444; border: solid #2b2b2b; border-width: 0 1px; }
.up svg { width: 10px; height: 11px; }
.grip { width: 18px; height: 16px; }
```

FILE: charts.js
```js
const NS = 'http://www.w3.org/2000/svg';
let seed = 11;
const rnd = () => (seed = (seed * 16807) % 2147483647) / 2147483647;

function canvas(id, x, y, w, h) {
  const pane = document.getElementById(id);
  const svg = document.createElementNS(NS, 'svg');
  svg.setAttribute('viewBox', [x, y, w, h].join(' '));
  svg.setAttribute('preserveAspectRatio', 'none');
  pane.querySelector('.plot').prepend(svg);
  const place = (host, text, cls, top, left) => {
    const s = document.createElement('span');
    s.textContent = text;
    s.className = cls || '';
    s.style.top = ((top - y) / h * 100) + '%';
    if (left !== undefined) s.style.left = ((left - x) / w * 100) + '%';
    host.append(s);
  };
  return {
    path(d, stroke, extra = {}) {
      const p = document.createElementNS(NS, 'path');
      p.setAttribute('d', d);
      p.setAttribute('stroke', stroke);
      p.setAttribute('fill', extra.fill || 'none');
      p.setAttribute('stroke-width', extra.width || 1);
      if (extra.dash) p.setAttribute('stroke-dasharray', extra.dash);
      svg.append(p);
    },
    axis(side, items) {
      const host = pane.querySelector('.axis.' + side);
      items.forEach(([text, top, cls]) => place(host, text, cls, top));
    },
    note(text, left, top) { place(pane.querySelector('.plot'), text, 'note', top, left); },
    grid(xs, ys) {
      xs.forEach(v => this.path(`M${v} ${y}V${y + h}`, '#3a3a3a'));
      ys.forEach(v => this.path(`M${x} ${v}H${x + w}`, '#2c2c2c'));
    }
  };
}
const pts = s => s.trim().split(/\s+/).map(p => p.split(',').map(Number));
const line = s => 'M' + s.trim().split(/\s+/).join('L');
/* smooth curve through the given points */
function curve(s) {
  const a = pts(s);
  let d = `M${a[0]}`;
  for (let i = 0; i < a.length - 1; i++) {
    const p0 = a[i - 1] || a[i], p1 = a[i], p2 = a[i + 1], p3 = a[i + 2] || p2;
    const k = (p2[0] - p1[0]) / 3;
    const m1 = (p2[1] - p0[1]) / (p2[0] - p0[0]), m2 = (p3[1] - p1[1]) / (p3[0] - p1[0]);
    d += `C${p1[0] + k} ${p1[1] + m1 * k} ${p2[0] - k} ${p2[1] - m2 * k} ${p2[0]} ${p2[1]}`;
  }
  return d;
}
function at(list, x) {
  for (let i = 1; i < list.length; i++) {
    if (x <= list[i][0]) {
      const [a, b] = [list[i - 1], list[i]];
      return a[1] + (b[1] - a[1]) * (x - a[0]) / (b[0] - a[0] || 1);
    }
  }
  return list[list.length - 1][1];
}

/* price */
const p = canvas('price', 29, 41, 555, 389);
p.grid([64.5, 386.5], [55.5, 97.5, 140.5, 182.5, 266.5, 308.5, 350.5, 392.5]);
p.path('M29 224.500H584', '#5a1616');
p.path(line('29,416 40,415 50,417 70,416 80,407 91,405 95,414 99,422 103,408 108,396 121,368 126,335 133,270 143,200 150,160 160,125 175,97 185,72 193,50 203,47 210,58 222,97 233,118 238,155 243,200 250,255 258,310 266,340 275,365 288,375 296,387 303,408 312,418 320,400 326,378 332,383 342,404 350,410 357,402 368,398 378,408 388,421 398,411 404,409 411,401 417,408 430,398 440,390 446,412 455,418 465,400 476,375 485,358 492,325 500,285 507,250 520,222 532,206 542,190 547,165 553,153 562,143 575,153 584,154'), '#8e2440');
p.path('M108 53.500H125M29 53.500H34M132.500 206V192.500H322.500V196.500H494', '#4f9a5c');
p.path('M29 82.500H125M132.500 238V225.500H322.500V228.500H494', '#e8e89a', { dash: '2 1' });
p.path('M29 221.500H125M29 332.500H125', '#a33a2a', { dash: '1 1' });
p.path('M132 360.500H322V364.500H494', '#c8c8a0', { dash: '1 1' });
const close = pts('29,212 50,210 70,204 80,200 90,204 91,225 98,255 105,240 115,235 119,243 121,290 125,330 128,342 132,352 135,340 138,332 143,355 150,335 165,325 175,322 188,345 195,325 215,320 228,315 250,322 272,325 280,345 297,330 300,305 310,335 318,355 322,370 327,345 330,315 333,285 337,305 345,320 352,340 365,340 370,318 385,315 395,325 427,320 430,350 435,338 445,330 450,308 465,308 478,300 483,290 487,250 493,232 500,233 515,235 525,240 537,243 545,225 560,229 584,222');
let up = '', down = '', last = 212;
for (let x = 29.5; x < 584; x += 1.5) {
  const c = at(close, x) + (rnd() - 0.5) * 13;
  const spread = 1 + rnd() * 4 + (rnd() > 0.95 ? 10 : 0);
  const seg = `M${x} ${Math.min(c, last) - spread / 2}V${Math.max(c, last) + spread / 2}`;
  if (c < last) up += seg; else down += seg;
  last = c;
}
up += 'M299.500 292V315M331.500 266V325M218.500 304V320M540.500 209V240M546.500 208V230M449.500 292V320';
p.path(up, '#5a9a3a');
p.path(down, '#a8401c');
p.path(curve('29,212 60,210 90,206 108,220 120,229 128,252 135,283 150,311 165,320 180,326 193,333 210,330 228,323 274,325 297,331 308,327 318,332 327,341 335,332 343,327 368,331 388,325 427,323 447,330 465,319 483,308 490,297 497,281 504,265 510,257 525,247 540,243 560,235 584,229'), '#c0392b', { width: 1.2 });
p.path(curve('29,212 60,210 90,206 100,212 110,220 121,225 128,244 134,265 150,292 160,307 170,314 193,325 215,323 228,322 274,324 285,328 297,331 308,327 318,330 327,338 333,333 343,327 355,328 368,331 378,327 388,325 427,323 436,327 447,330 465,320 485,311 493,298 500,286 515,268 530,256 545,249 560,241 584,233'), '#f5e8e0', { width: 1.2 });
p.path('M29 223.500H91L125 330M132 354L322 372L494 226', '#7fc96c', { dash: '7 5' });
const diamond = (x, y) => `M${x - 3.5} ${y}l3.500 -3.500l3.500 3.500l-3.500 3.500z`;
p.path(diamond(91.5, 223) + diamond(133, 353) + diamond(132.5, 360) + diamond(322, 372), '#9bff7a', { width: 1.3 });
const arrow = (x, y) => `M${x} ${y - 5}l4 5h-2v4h-4v-4h-2z`;
p.path(arrow(91.5, 254) + arrow(133, 366) + arrow(132.5, 385) + arrow(322, 384), '#8dff6a', { fill: '#8dff6a' });
p.path('M91.500 259v4M89.500 261h4M322 390v4', '#8dff6a');
p.path('M122 330l6 6M128 330l-6 6M491 223l6 6M497 223l-6 6', '#b6ff8a', { width: 1.6 });
p.path('M122 324v-4h6v4M491 219v-4h6v4', '#8dff6a', { width: 2 });
p.path('M129.500 392v4h6v-4', '#8ec8ff', { width: 2 });
p.path('M132.500 371a3 3 0 1 0 .1 0', '#8dff6a');
p.note('AddLong6; 12 (3); 16 506.5', 33, 279);
p.note('SL_Long; 0 (-12); 16 176.5', 69, 303);
p.note('4; 6; 16 095.3', 104, 406);
p.note('AddLong5; 9 (3); 16 063.0', 266, 410);
p.note('TP_Long; 0 (-9); 16 497.0', 441, 199);
p.axis('left', [['350.0', 48], ['300.0', 101], ['249.7', 155, 'tag-pink'], ['200.0', 208], ['150.0', 262], ['100.0', 315], ['50.0', 369]]);
p.axis('right', [['17 000.0', 57], ['16 875.0', 99], ['16 750.0', 141], ['16 625.0', 183], ['16 497.0', 221, 'tag-redtop'], ['16 473.1', 234, 'tag-white'], ['16 375.0', 267], ['16 250.0', 310], ['16 125.0', 352], ['16 000.0', 393]]);

/* RSI */
const r = canvas('rsi', 29, 432, 555, 119);
r.grid([64.5, 386.5], [450.5, 500.5]);
let d = '', v = 0;
for (let x = 29; x <= 584; x += 1) {
  v = v * 0.66 + (rnd() - 0.5) * 42;
  const spike = x === 91 ? 50 : x === 121 ? 38 : x === 332 ? -44 : 0;
  d += (d ? 'L' : 'M') + x + ' ' + Math.max(444, Math.min(542, 487 + v + spike)).toFixed(1);
}
r.path(d, '#858585');
r.path('M29 462.500H584', '#a01010');
r.path('M29 514.500H584', '#1f7a35');
r.axis('right', [['80.0', 450], ['70.0', 463, 'tag-red'], ['48.9', 488, 'tag-gray'], ['40.0', 502], ['30.0', 515, 'tag-green']]);

/* ADX */
const a = canvas('adx', 29, 553, 555, 92);
a.grid([64.5, 386.5], [559.5, 602.5]);
d = ''; v = 0;
for (let x = 29; x <= 584; x += 1) {
  v = v * 0.82 + (rnd() - 0.5) * 14;
  const big = [[126, 34], [320, 26], [543, 32], [100, 22], [490, 14]].reduce((s, [c, m]) => s + m * Math.exp(-((x - c) ** 2) / 14), 0);
  d += (d ? 'L' : 'M') + x + ' ' + Math.max(562, Math.min(637, 613 + v + Math.sin(x / 1.7 + Math.sin(x / 9) * 3) * 12 - big)).toFixed(1);
}
a.path(d, '#3f57cc', { width: 1.2 });
a.axis('right', [['80.0', 559], ['40.0', 599], ['31.9', 613, 'tag-blue']]);

/* position */
const q = canvas('pos', 29, 647, 555, 82);
q.grid([64.5, 386.5], [665.5]);
q.path('M29 671H94V655H125V721H29ZM132 687H322V671H494V721H132Z', 'none', { fill: '#006400' });
q.path('M29 722H584', '#0a4a0a');
q.axis('right', [['10.0', 666], ['0.0', 721, 'tag-dark']]);

/* signal control */
const c = canvas('ctl', 29, 731, 555, 60);
c.grid([64.5, 386.5], [757.5]);
c.axis('right', [['1', 758]]);

/* income, drawn on a grid three times finer than the pixels */
const n = canvas('income', 21, 72, 465, 1128);
n.grid([193, 368], [206, 431, 656, 880]);
const base = pts('21,1105 28,1080 35,1020 42,1040 50,965 58,935 64,850 70,770 78,690 85,645 92,695 98,655 103,665 108,620 115,520 122,500 130,545 138,490 150,405 157,470 163,510 172,395 180,352 192,350 200,318 205,330 212,240 218,310 228,395 240,330 248,275 262,205 267,310 272,355 285,335 290,300 297,330 305,285 318,330 324,410 332,370 345,330 352,345 360,290 370,350 378,235 388,205 398,150 408,95 415,115 425,150 435,215 445,180 455,160 465,145 475,150 486,165');
let edge = 'M21 1105', fillTop = 'M21 1105';
for (let x = 24; x <= 486; x += 4) {
  const y = Math.round(at(base, x) + (rnd() - 0.5) * 22);
  edge += `H${x}V${y - 6}`;
  fillTop += `H${x}V${y}`;
}
edge += 'H486'; fillTop += 'H486V1105Z';
n.path(edge, '#b070c0', { width: 1.2 });
n.path('M408 90V150M262 195V280M212 230V300M92 625V700M64 845V900M35 1010V1060M458 125V180', '#a030b0', { width: 1.4 });
n.path(fillTop, '#7a9a70', { fill: '#28ff00', width: 0.8 });
n.path('M25 1105L486 90', '#1c7a10');
const steps = s => pts(s).reduce((d, [x, y], i) => d + (i ? `H${x}V${y}` : `M${x} ${y}`), '');
n.path(steps('21,1105 35,1070 45,1060 55,950 65,920 78,870 88,830 93,890 100,830 110,760 118,735 122,715 130,760 135,735 143,680 150,620 158,700 163,685 193,685 198,740 205,650 212,605 218,650 222,680 228,710 248,705 258,690 262,680 268,745 280,760 288,690 305,685 312,730 318,700 322,818 333,815 338,765 345,775 350,790 360,745 372,735 378,685 392,680 400,625 411,625 415,690 425,750 435,790 450,775 462,775 465,820 475,795 484,825'), '#00a838');
n.path('M21 1100L25 1165L30 1085L38 1080L45 1110H52L57 1165L60 1100L64 1000L70 940L82 905L90 910L98 990L108 960L115 892H165V860H172V830H178V800H185V775H192V730H200V790H207V740H214V785H218V740H222V772H234V720H245V700H252V675H258V645H264V690H268V720H282V700H287V755H295V725H302V705H325V664H360L366 720L372 665L378 680L385 650L388 670V635H398V605H408V570H414V538H438L441 490L446 530L449 480L452 510L455 485L458 457H486', '#e04a10');
n.path('M21 1105H486', '#18b020', { width: 1.5 });
n.path(line('21,1110 30,1115 40,1105 60,1108 90,1100 108,1096 122,1103 128,1122 145,1125 160,1130 175,1142 195,1140 210,1118 225,1130 240,1145 260,1138 290,1142 320,1135 345,1142 365,1130 385,1132 408,1124 418,1165 440,1170 460,1162 486,1168'), '#3d3dc0', { width: 1.3 });
n.axis('right', [['113 516.22820000', 91, 'tag-gold'], ['106 628.35430000', 152, 'tag-mag'], ['100 000.00000000', 212], ['75 000.00000000', 429], ['72 392.79705000', 462, 'tag-orange'], ['50 000.00000000', 660], ['34 235.55725000', 802, 'tag-emer'], ['25 000.00000000', 884], ['0.00000000', 1108, 'tag-maroon'], ['-6 751.82495000', 1169, 'tag-indigo']]);
```
